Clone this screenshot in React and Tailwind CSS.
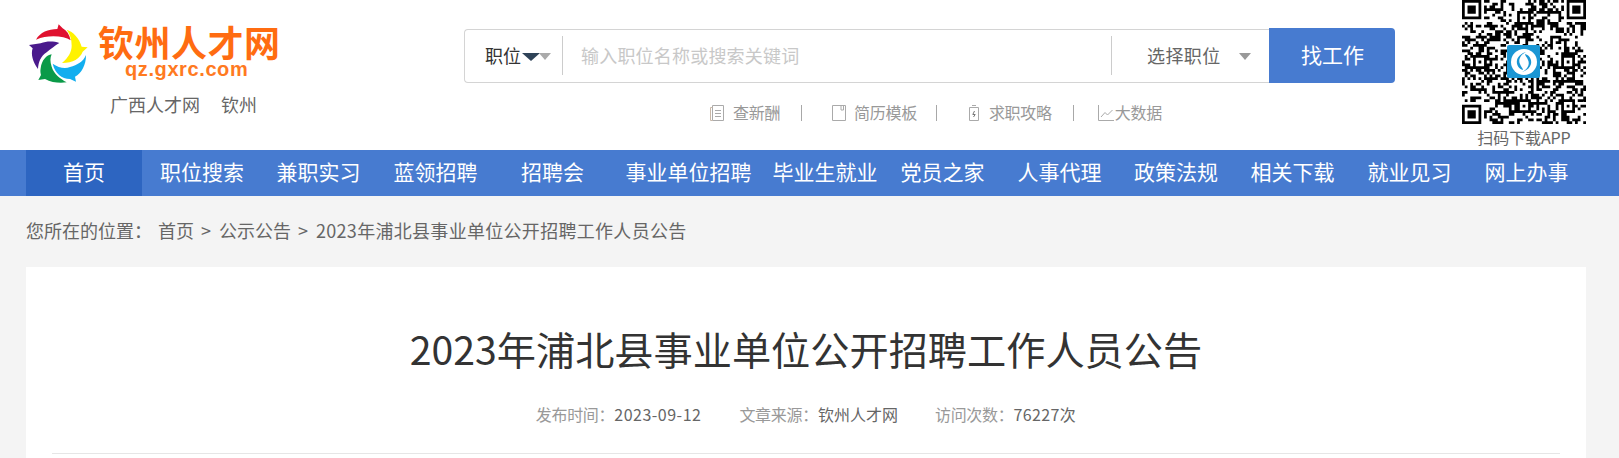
import React from 'react';

const NAV = [
  ['首页', 'w-[116px] bg-[#2d65c1]'],
  ['职位搜索', 'w-[118px] pl-[2px]'],
  ['兼职实习', 'w-[117px]'],
  ['蓝领招聘', 'w-[117px]'],
  ['招聘会', 'w-[117px]'],
  ['事业单位招聘', 'w-[155px]'],
  ['毕业生就业', 'w-[118px]'],
  ['党员之家', 'w-[117px]'],
  ['人事代理', 'w-[117px]'],
  ['政策法规', 'w-[116px]'],
  ['相关下载', 'w-[117px]'],
  ['就业见习', 'w-[117px]'],
  ['网上办事', 'w-[117px]'],
];

// QR code drawing: finder and alignment patterns fixed, the rest seeded noise
const buildQrPath = () => {
  const size = 45;
  const grid = [];
  let seed = 20230912;
  const next = () => {
    seed = (seed * 1664525 + 1013904223) % 4294967296;
    return seed / 4294967296;
  };
  for (let y = 0; y < size; y++) {
    grid.push([]);
    for (let x = 0; x < size; x++) grid[y].push(next() > 0.52);
  }
  const finder = (ox, oy) => {
    for (let y = -1; y < 8; y++) {
      for (let x = -1; x < 8; x++) {
        const gx = ox + x;
        const gy = oy + y;
        if (gx < 0 || gy < 0 || gx >= size || gy >= size) continue;
        const ring = x === 0 || x === 6 || y === 0 || y === 6;
        const core = x >= 2 && x <= 4 && y >= 2 && y <= 4;
        const inside = x >= 0 && x <= 6 && y >= 0 && y <= 6;
        grid[gy][gx] = inside && (ring || core);
      }
    }
  };
  finder(0, 0);
  finder(38, 0);
  finder(0, 38);
  [[6, 22], [22, 6], [22, 38], [38, 22], [38, 38]].forEach(([cx, cy]) => {
    for (let y = -2; y <= 2; y++) {
      for (let x = -2; x <= 2; x++) {
        grid[cy + y][cx + x] = Math.abs(x) === 2 || Math.abs(y) === 2 || (x === 0 && y === 0);
      }
    }
  });
  let d = '';
  grid.forEach((row, y) => {
    row.forEach((on, x) => {
      if (on) d += `M${x} ${y}h1v1h-1z`;
    });
  });
  return d;
};

const qrPath = buildQrPath();

const Logo = () => (
  <svg viewBox="0 0 225 225" className="w-[75px] h-[75px] shrink-0">
    <path d="M48 74C60 52 85 42 112 42L116 28L128 40C140 46 148 58 152 76C140 68 122 64 100 64C82 64 65 66 48 74Z" fill="#e0112f" />
    <path d="M140 44C160 50 178 70 185 95L203 97L188 110C180 130 160 144 126 144C145 128 155 110 155 92C155 72 150 58 140 44Z" fill="#fff200" />
    <path d="M198 120C198 150 185 175 165 185L168 200L150 192C125 192 105 175 98 146C115 158 135 162 150 156C172 150 190 140 198 120Z" fill="#12aeef" />
    <path d="M95 118C80 120 65 135 62 160C60 170 62 175 63 180L55 195L75 192C95 203 120 205 140 202C120 190 102 178 95 155C90 140 90 128 95 118Z" fill="#0a9a48" />
    <path d="M118 84C100 78 80 78 62 85L27 90L38 100C32 118 38 140 54 162C55 142 62 124 80 112C92 102 105 92 118 84Z" fill="#4a1a8c" />
  </svg>
);

const Triangle = ({ className }) => (
  <div className={`w-0 h-0 border-x-transparent border-b-0 ${className}`} />
);

const QrCode = () => (
  <div className="relative w-[124px] h-[124px]">
    <svg viewBox="0 0 45 45" className="w-[124px] h-[124px]">
      <path d={qrPath} fill="#000" />
    </svg>
    <div className="absolute left-[45px] top-[45px] w-[33px] h-[33px] rounded-[2px] bg-[#1a96d4] flex items-center justify-center">
      <svg viewBox="0 0 26 26" className="w-[26px] h-[26px]">
        <circle cx="13" cy="13" r="13" fill="#fff" />
        <path d="M15 3C9 6 7 11 9 15C10 18 12 19 12 21C8 20 5 16 6 11C7 7 11 4 15 3Z" fill="#1a96d4" />
        <path d="M11 23C17 20 19 15 17 11C16 8 14 7 14 5C18 6 21 10 20 15C19 19 15 22 11 23Z" fill="#1a96d4" />
      </svg>
    </div>
  </div>
);

const Separator = ({ className }) => <div className={`w-px h-[16px] bg-[#a8a8a8] ${className}`} />;

const App = () => {
  return (
    <div className="h-[458px] overflow-hidden bg-white font-['Noto_Sans_CJK_SC','Microsoft_YaHei',sans-serif] text-[#666]">
      {/* Header */}
      <header className="flex h-[150px] pl-[20px] overflow-hidden">
        <div className="w-[444px] shrink-0 pt-[15px]">
          <div className="flex">
            <Logo />
            <div className="ml-[3px] pt-[9px] flex flex-col items-start">
              <div className="text-[36px] leading-[34px] font-bold tracking-[0.5px] text-[#ff6c11] whitespace-nowrap">钦州人才网</div>
              <div className="ml-[27px] text-[20px] leading-[20px] mt-[1px] tracking-[0.6px] font-['Liberation_Sans',sans-serif] font-bold text-[#ff7a1f] whitespace-nowrap">qz.gxrc.com</div>
            </div>
          </div>
          <div className="ml-[90px] mt-[3px] text-[18px] leading-[22px] flex gap-[21px]">
            <span>广西人才网</span>
            <span>钦州</span>
          </div>
        </div>

        <div className="w-[931px] shrink-0">
          {/* Search */}
          <div className="mt-[28px] h-[55px] flex items-center">
            <div className="flex-1 h-[54px] border border-r-0 border-[#d4d4d4] rounded-l-[4px] flex items-center text-[18px]">
              <span className="ml-[20px] mt-[-2px] text-[#333] leading-[24px]">职位</span>
              <Triangle className="mt-[3px] ml-[1px] border-x-[9px] border-t-[8px] border-t-[#2f4358]" />
              <Triangle className="mt-[2px] ml-[-1px] border-x-[6px] border-t-[7px] border-t-[#aaa]" />
              <div className="ml-[11px] w-px h-[39px] bg-[#ccc]" />
              <span className="ml-[18px] mt-[-2px] w-[530px] tracking-[0.2px] text-[#c8c8c8] leading-[24px]">输入职位名称或搜索关键词</span>
              <div className="w-px h-[39px] bg-[#ccc]" />
              <span className="ml-[35px] mt-[-2px] tracking-[0.4px] leading-[24px]">选择职位</span>
              <Triangle className="mt-[2px] ml-[18px] border-x-[6px] border-t-[7px] border-t-[#999]" />
            </div>
            <button className="w-[126px] h-[55px] pb-[2px] pl-[1px] bg-[#477bd0] rounded-r-[4px] text-white text-[21px]">找工作</button>
          </div>

          {/* Quick links */}
          <div className="mt-[18px] h-[24px] pl-[245px] flex items-center text-[16px] leading-[24px] tracking-[-0.3px] text-[#999] whitespace-nowrap">
            <svg viewBox="0 0 16 18" className="w-[16px] h-[18px] shrink-0" fill="none" stroke="#aaa" strokeWidth="1">
              <path d="M3.5 1.5H14.5V16.5H3.5Z" />
              <path d="M3.5 3.5H1.5V16.5H3.5" stroke="#c9b8a8" />
              <path d="M6 6.5H12M6 9.5H12M6 12.5H12" />
            </svg>
            <span className="ml-[8px] mt-[-2px]">查新酬</span>
            <Separator className="ml-[21px]" />
            <svg viewBox="0 0 14 18" className="ml-[30px] w-[14px] h-[18px] shrink-0" fill="none" stroke="#aaa" strokeWidth="1">
              <path d="M.5 1.5H13.5V16.5H.5Z" />
              <path d="M9 1.5V6H11.5V1.5" />
            </svg>
            <span className="ml-[8px] mt-[-2px]">简历模板</span>
            <Separator className="ml-[19px]" />
            <svg viewBox="0 0 10 18" className="ml-[32px] w-[10px] h-[18px] shrink-0" fill="none" stroke="#aaa" strokeWidth="1">
              <path d="M.5 3.5H9.5V16.5H.5Z" />
              <path d="M3 1.5H7" />
              <path d="M5.5 7L3.8 10.5H6.2L4.5 13" stroke="#777" />
            </svg>
            <span className="ml-[10px] mt-[-2px]">求职攻略</span>
            <Separator className="ml-[21px]" />
            <svg viewBox="0 0 16 18" className="ml-[24px] w-[16px] h-[18px] shrink-0" fill="none" stroke="#aaa" strokeWidth="1">
              <path d="M.5 1V16.5H16" />
              <path d="M3 13L7 8.5L9.5 11L14.5 6" />
            </svg>
            <span className="ml-[1px] mt-[-2px]">大数据</span>
          </div>
        </div>

        {/* QR code */}
        <div className="ml-[67px] w-[124px] shrink-0 flex flex-col items-center">
          <QrCode />
          <div className="mt-[4px] text-[16px] leading-[18px] tracking-[-0.1px] whitespace-nowrap">扫码下载APP</div>
        </div>
      </header>

      {/* Nav */}
      <nav className="h-[46px] bg-[#477bd0] pl-[26px] flex">
        {NAV.map(([label, width]) => (
          <a key={label} className={`${width} pb-[2px] flex items-center justify-center text-[21px] text-white whitespace-nowrap`}>
            {label}
          </a>
        ))}
      </nav>

      <main className="bg-[#f4f4f4] px-[26px] h-[262px]">
        {/* Breadcrumb */}
        <div className="h-[71px] pb-[2px] flex items-center text-[18px] whitespace-nowrap">
          <span>您所在的位置：</span>
          <span className="ml-[6px]">首页</span>
          <span className="ml-[7px]">&gt;</span>
          <span className="ml-[8px]">公示公告</span>
          <span className="ml-[7px]">&gt;</span>
          <span className="ml-[8px] tracking-[0.3px]">2023年浦北县事业单位公开招聘工作人员公告</span>
        </div>

        {/* Article */}
        <article className="w-[1560px] bg-white px-[26px] h-[191px]">
          <h1 className="pt-[53px] text-center text-[39.2px] leading-[56px] font-normal text-[#333] whitespace-nowrap">
            2023年浦北县事业单位公开招聘工作人员公告
          </h1>
          <div className="mt-[26px] flex justify-center text-[16px] leading-[24px] whitespace-nowrap border-b border-[#e6e6e6] pb-[27px]">
            <span className="text-[#999] tracking-[-0.3px]">发布时间：</span>
            <span className="tracking-[0.5px]">2023-09-12</span>
            <span className="ml-[38px] text-[#999] tracking-[-0.3px]">文章来源：</span>
            <span>钦州人才网</span>
            <span className="ml-[37px] text-[#999] tracking-[-0.3px]">访问次数：</span>
            <span className="tracking-[0.4px]">76227次</span>
          </div>
        </article>
      </main>
    </div>
  );
};

export default App;
